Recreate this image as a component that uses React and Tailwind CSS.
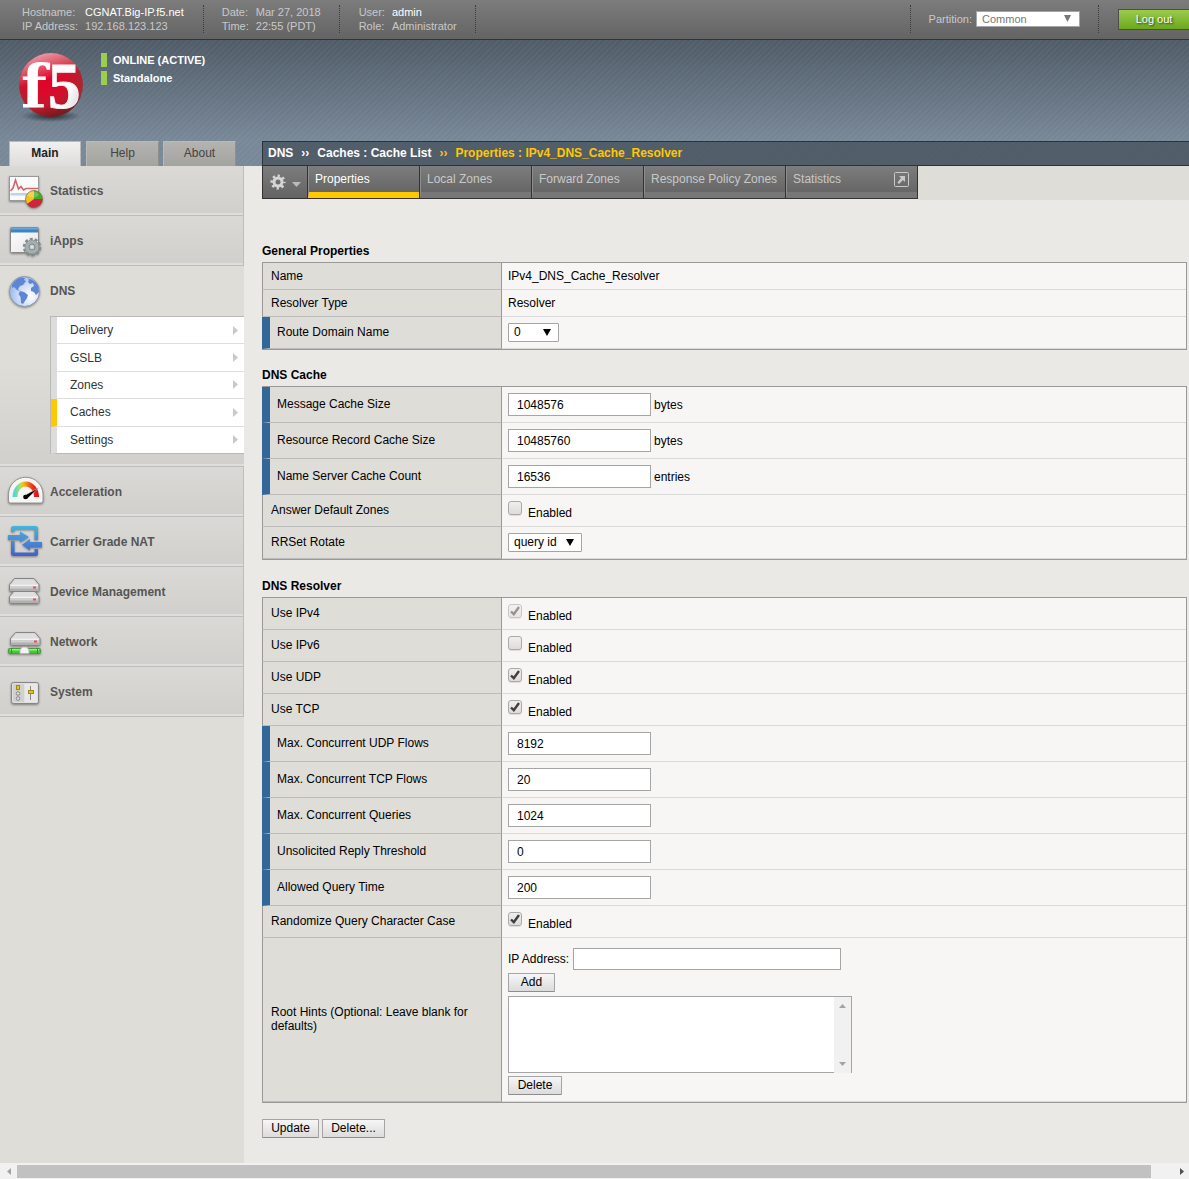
import React from "react";

const stripes =
  "bg-[repeating-linear-gradient(135deg,rgba(255,255,255,0.035)_0px,rgba(255,255,255,0.035)_2px,transparent_2px,transparent_4px)]";

function Logo() {
  return (
    <svg width="72" height="90" viewBox="0 -8 72 90" role="img" aria-label="f5">
      <defs>
        <radialGradient id="ball" cx="0.42" cy="0.38" r="0.65">
          <stop offset="0" stopColor="#e4002b" />
          <stop offset="0.55" stopColor="#d2102a" />
          <stop offset="0.85" stopColor="#b02330" />
          <stop offset="1" stopColor="#8e3a40" />
        </radialGradient>
        <linearGradient id="gloss" x1="0.2" y1="0" x2="0.5" y2="1">
          <stop offset="0" stopColor="#fff" stopOpacity="0.65" />
          <stop offset="0.45" stopColor="#fff" stopOpacity="0" />
          <stop offset="0.8" stopColor="#500" stopOpacity="0" />
          <stop offset="1" stopColor="#400" stopOpacity="0.45" />
        </linearGradient>
        <linearGradient id="letters" x1="0" y1="0" x2="1" y2="1">
          <stop offset="0" stopColor="#fff" />
          <stop offset="0.6" stopColor="#fff" />
          <stop offset="1" stopColor="#c9c4c4" />
        </linearGradient>
        <radialGradient id="ballShadow">
          <stop offset="0" stopColor="#1c232b" stopOpacity="0.9" />
          <stop offset="1" stopColor="#1c232b" stopOpacity="0" />
        </radialGradient>
      </defs>
      <ellipse cx="36" cy="64" rx="30" ry="6" fill="url(#ballShadow)" />
      <circle cx="36" cy="33" r="32" fill="url(#ball)" />
      <circle cx="36" cy="33" r="32" fill="url(#gloss)" />
      <text x="6" y="56" fontFamily="'DejaVu Serif', serif" fontWeight="700" fontSize="60" fill="url(#letters)">
        f
      </text>
      <text
        x="33"
        y="56"
        fontFamily="'Liberation Serif', serif"
        fontWeight="700"
        fontSize="65"
        fill="url(#letters)"
        stroke="#f3f0f0"
        strokeWidth="1"
      >
        5
      </text>
    </svg>
  );
}

const iconShadow = "shrink-0 drop-shadow-[0_1px_1px_rgba(0,0,0,0.4)]";

function StatisticsIcon() {
  return (
    <svg width="38" height="37" viewBox="0 0 38 37" className={iconShadow} aria-hidden="true">
      <rect x="3.5" y="5.5" width="29" height="24" fill="#fafafa" stroke="#999" />
      <rect x="4.5" y="22" width="27" height="2.500" fill="#bcd3ea" />
      <path d="M4.500 20L7 17 9.500 9 12.500 18 15 15.500 17.500 19 20 17.500H32" fill="none" stroke="#d2666b" strokeWidth="1.6" />
      <circle cx="28" cy="28" r="8.5" fill="#f1c21b" />
      <path d="M28 28V19.500A8.500 8.500 0 0 1 36.300 28.500Z" fill="#3fae22" />
      <path d="M28 28L36.400 28A8.500 8.500 0 0 1 21 33Z" fill="#d4213d" />
      <ellipse cx="27" cy="23.500" rx="5.500" ry="3" fill="#fff" opacity="0.25" />
      <circle cx="28" cy="28" r="8.500" fill="none" stroke="#6b5a3a" strokeWidth="0.600" />
    </svg>
  );
}

function IAppsIcon() {
  return (
    <svg width="38" height="37" viewBox="0 0 38 37" className={iconShadow} aria-hidden="true">
      <defs>
        <linearGradient id="win" x1="0" y1="0" x2="1" y2="1">
          <stop offset="0" stopColor="#fff" />
          <stop offset="1" stopColor="#e4e4e8" />
        </linearGradient>
      </defs>
      <rect x="4.500" y="6.500" width="28" height="25" rx="1" fill="url(#win)" stroke="#888" />
      <rect x="5" y="6.500" width="27" height="5" fill="#3f83c7" />
      <rect x="5" y="6.500" width="27" height="2" fill="#68a6de" />
      <circle cx="26" cy="26" r="8" fill="none" stroke="#808a8c" strokeWidth="2.400" strokeDasharray="3 2.026" />
      <circle cx="26" cy="26" r="7" fill="#a5afb0" stroke="#868f91" strokeWidth="0.800" />
      <circle cx="26" cy="26" r="3" fill="#c7cdce" stroke="#7d8688" />
      <circle cx="26" cy="26" r="1" fill="#e4e8e8" />
    </svg>
  );
}

function GlobeIcon() {
  return (
    <svg width="38" height="37" viewBox="0 0 38 37" className={iconShadow} aria-hidden="true">
      <defs>
        <radialGradient id="sea" cx="0.7" cy="0.65" r="0.8">
          <stop offset="0" stopColor="#fff" />
          <stop offset="0.5" stopColor="#cfdcf7" />
          <stop offset="1" stopColor="#8daee8" />
        </radialGradient>
      </defs>
      <circle cx="18.500" cy="19.500" r="15" fill="url(#sea)" stroke="#909aa8" />
      <path
        d="M6 13c2-4 5-6.500 9-7.500l4 .5-1 2 2 1-3 4-3 1-2 3 2 2-3-1-3-3-2 1zM14 19l4 1 4 3-1 3-4 6-2-1-.500-6-2-3zM22 6.500c5 1 9 4 10.500 8.500L33 20l-3 3-2-3-3-1v-3l3-2-1-3-3 1-2-2 1-2z"
        fill="#5f86d3"
      />
    </svg>
  );
}

function GaugeIcon() {
  return (
    <svg width="39" height="37" viewBox="0 0 39 37" className={iconShadow} aria-hidden="true">
      <defs>
        <linearGradient id="speed">
          <stop offset="0" stopColor="#58d6d0" />
          <stop offset="0.25" stopColor="#b8dc5a" />
          <stop offset="0.4" stopColor="#f6b81c" />
          <stop offset="0.7" stopColor="#f0501c" />
          <stop offset="1" stopColor="#e6101c" />
        </linearGradient>
      </defs>
      <path d="M2.500 29V22.500a17 17 0 0 1 34.500 0V29q0 2-2 2H4.500q-2 0-2-2Z" fill="#f5f5f2" stroke="#929292" />
      <path d="M9 25a10.700 13 0 0 1 21.500 0" fill="none" stroke="url(#speed)" strokeWidth="5" />
      <path d="M17.500 24L33 15.500 21 27q-3 0-3.500-3Z" fill="#000" stroke="#f5f5f2" strokeWidth="0.500" />
      <circle cx="19.500" cy="25" r="2.300" fill="#000" />
    </svg>
  );
}

function NatIcon() {
  return (
    <svg width="38" height="37" viewBox="0 0 38 37" className={iconShadow} aria-hidden="true">
      <defs>
        <linearGradient id="nat" x1="0" y1="4" x2="0" y2="34" gradientUnits="userSpaceOnUse">
          <stop offset="0" stopColor="#44b5dc" />
          <stop offset="0.5" stopColor="#4a8ad8" />
          <stop offset="1" stopColor="#4060cc" />
        </linearGradient>
      </defs>
      <g fill="url(#nat)">
        <path d="M5 10V6.500Q5 4 7.500 4H29.500Q32 4 32 6.500V18H28.500V7.500H8.500V10Z" />
        <path d="M32 27V31.500Q32 34 29.500 34H7.500Q5 34 5 31.500V19H8.500V30.500H28.500V27Z" />
        <path d="M2 13H14V9.500L23 15 14 20.500V18H2Z" />
        <path d="M36 20H24V17L16 22.800 24 28.500V25.500H36Z" />
      </g>
    </svg>
  );
}

function Server() {
  return (
    <g>
      <path d="M0.500 6.500L5.500 0.500H25L30 6.500V12Q30 13.500 28.500 13.500H2Q0.500 13.500 0.500 12Z" fill="#cfcfcf" stroke="#858585" />
      <path d="M2 6.500L6 1.500H24.500L28.500 6.500Z" fill="#dedede" />
      <path d="M1.500 6.500H29V8H1.500Z" fill="#f2f2f2" />
      <path d="M1 10.500H29.500V13H1Z" fill="#b0b0b0" />
      <rect x="24" y="8.500" width="3" height="2" fill="#f04a58" />
    </g>
  );
}

function DevicesIcon() {
  return (
    <svg width="38" height="37" viewBox="0 0 38 37" className={iconShadow} aria-hidden="true">
      <g transform="translate(3 18)">
        <Server />
      </g>
      <g transform="translate(3 6)">
        <Server />
      </g>
    </svg>
  );
}

function NetworkIcon() {
  return (
    <svg width="38" height="37" viewBox="0 0 38 37" className={iconShadow} aria-hidden="true">
      <g transform="translate(4 10)">
        <Server />
      </g>
      <rect x="2.500" y="26.500" width="32" height="5" rx="1" fill="#45c832" stroke="#4d9a40" />
      <rect x="4" y="27" width="29" height="1.500" fill="#9bea8b" />
      <rect x="5" y="26" width="1" height="6" fill="#3b8e2e" />
      <rect x="31" y="26" width="1" height="6" fill="#3b8e2e" />
      <path d="M14 31.500V28L16 25H21L23 28V31.500Z" fill="#f4f4f4" stroke="#b4b4b4" />
    </svg>
  );
}

function SystemIcon() {
  return (
    <svg width="38" height="37" viewBox="0 0 38 37" className={iconShadow} aria-hidden="true">
      <rect x="5.500" y="10.500" width="27" height="21" rx="2" fill="#e0e0e0" stroke="#858585" />
      <rect x="7" y="12" width="11" height="18" fill="#d0d0d0" />
      <rect x="19" y="12" width="12" height="18" fill="#e8e8e8" />
      <g stroke="#888" fill="#ddd">
        <rect x="10.500" y="13.500" width="3" height="4" fill="#e4c414" stroke="#9a8a1c" />
        <circle cx="12" cy="21.500" r="1.800" />
        <circle cx="12" cy="26.500" r="1.800" />
      </g>
      <rect x="24" y="14" width="1" height="14" fill="#888" />
      <rect x="22.500" y="18.500" width="5" height="3" fill="#e4c414" stroke="#9a8a1c" />
    </svg>
  );
}

function GearIcon() {
  return (
    <svg width="16" height="16" viewBox="0 0 16 16" aria-hidden="true">
      <circle cx="8" cy="8" r="6.300" fill="none" stroke="#d6d6d6" strokeWidth="2.600" strokeDasharray="2.300 2.648" strokeDashoffset="1.150" />
      <circle cx="8" cy="8" r="4" fill="none" stroke="#d6d6d6" strokeWidth="3" />
    </svg>
  );
}

function PopoutIcon() {
  return (
    <svg width="15" height="15" viewBox="0 0 15 15" aria-hidden="true">
      <rect x="0.500" y="0.500" width="14" height="14" rx="1" fill="none" stroke="#c8c8c8" />
      <path d="M5 4H11V10L9 8 5 12 3.500 10.500 7 6Z" fill="#c8c8c8" />
    </svg>
  );
}

function Separator() {
  return <div className="h-7 border-l border-dotted border-[#3c3c3c]" />;
}

function InfoGroup({ rows, className }) {
  return (
    <dl className={`grid grid-cols-[auto_auto] gap-x-[7px] text-[11px] leading-[14px] text-[#c9c9c9] ${className}`}>
      {rows.map(([label, value, strong]) => (
        <React.Fragment key={label}>
          <dt>{label}</dt>
          <dd className={strong ? "text-white" : ""}>{value}</dd>
        </React.Fragment>
      ))}
    </dl>
  );
}

function TopBar() {
  return (
    <div className="flex h-10 items-start justify-between border-b border-[#333] bg-gradient-to-b from-[#7c7c7c] to-[#646464] pt-[5px]">
      <div className="flex">
        <InfoGroup
          className="pr-[19px] pl-[22px]"
          rows={[
            ["Hostname:", "CGNAT.Big-IP.f5.net", true],
            ["IP Address:", "192.168.123.123"],
          ]}
        />
        <Separator />
        <InfoGroup
          className="px-[18px]"
          rows={[
            ["Date:", "Mar 27, 2018"],
            ["Time:", "22:55 (PDT)"],
          ]}
        />
        <Separator />
        <InfoGroup
          className="pr-[18px] pl-[19px]"
          rows={[
            ["User:", "admin", true],
            ["Role:", "Administrator"],
          ]}
        />
        <Separator />
      </div>
      <div className="flex">
        <Separator />
        <div className="flex items-center gap-1 px-[18px]">
          <label htmlFor="partition" className="text-[11px] text-[#c9c9c9]">
            Partition:
          </label>
          <div className="relative">
            <select
              id="partition"
              className="block h-4 w-[104px] appearance-none border border-[#a5a5a5] bg-white pl-[5px] text-[11px] leading-[14px] text-[#777]"
            >
              <option>Common</option>
            </select>
            <svg className="pointer-events-none absolute top-1 right-[9px]" width="7" height="7" viewBox="0 0 7 7" aria-hidden="true">
              <path d="M0 0H7L3.500 7Z" fill="#777" />
            </svg>
          </div>
        </div>
        <Separator />
        <button
          type="button"
          className="mt-1 ml-[19px] h-[21px] w-[71px] border border-r-0 border-[#4c4c4c] bg-gradient-to-b from-[#9ccb4b] to-[#6ca81a] pb-px text-[11px] leading-[14px] text-white [text-shadow:1px_1px_2px_rgba(0,0,0,0.7)]"
        >
          Log out
        </button>
      </div>
    </div>
  );
}

function SideTab({ children, active }) {
  return (
    <button
      type="button"
      className={
        active
          ? "mr-px h-[25px] w-[72px] border border-b-0 border-[#b9b9b9] bg-gradient-to-b from-[#f0f0ee] to-[#dedddb] pb-[2px] text-xs leading-[14px] font-bold text-[#222]"
          : "h-[25px] w-[73px] border border-b-0 border-[#b9b9b9] border-r-[#8f8f8d] bg-gradient-to-b from-[#b3b3af] to-[#a3a39f] pb-[2px] text-xs leading-[14px] text-[#444]"
      }
    >
      {children}
    </button>
  );
}

function Banner() {
  return (
    <div className="bg-gradient-to-b from-[#4f5b67] to-[#788898] to-80%">
      <div className={stripes}>
        <div className="flex h-[101px] items-start gap-[14px] pt-1 pl-[15px]">
          <Logo />
          <div className="flex flex-col gap-1 pt-[9px] text-[11px] leading-[14px] font-bold text-white">
            <div className="flex gap-[6px]">
              <span className="w-[6px] bg-[#9bcd50]" />
              ONLINE (ACTIVE)
            </div>
            <div className="flex gap-[6px]">
              <span className="w-[6px] bg-[#9bcd50]" />
              Standalone
            </div>
          </div>
        </div>
        <div className="flex">
          <div className="flex w-[262px] shrink-0 gap-1 pl-[9px]">
            <SideTab active>Main</SideTab>
            <SideTab>Help</SideTab>
            <SideTab>About</SideTab>
          </div>
          <nav
            aria-label="Breadcrumb"
            className="flex h-[25px] flex-1 items-center gap-2 border border-r-0 border-[#2c3238] bg-[#48535f]/80 pb-[2px] pl-[5px] text-xs leading-[14px] font-bold text-white"
          >
            <a href="#dns">DNS</a>
            <span>››</span>
            <a href="#caches">Caches : Cache List</a>
            <span className="text-[#ffc800]">››</span>
            <span className="text-[#ffc800]">Properties : IPv4_DNS_Cache_Resolver</span>
          </nav>
        </div>
      </div>
    </div>
  );
}

const itemBg = "bg-gradient-to-b from-[#dad9d5] to-[#d1d0cc]";

function SideItem({ icon, label }) {
  return (
    <li className="border-r border-b border-[#bdbdbd]">
      <a
        href="#section"
        className={`flex h-[49px] items-center border-b-2 border-[#dfdeda] pl-[6px] text-xs leading-[14px] font-bold text-[#555] ${itemBg}`}
      >
        <span className="flex w-11">{icon}</span>
        <span className="pt-[2px]">{label}</span>
      </a>
    </li>
  );
}

function SubMenu() {
  const items = ["Delivery", "GSLB", "Zones", "Caches", "Settings"];
  return (
    <ul className="ml-[50px] grid h-[138px] grid-rows-5 border-t border-l border-[#b9b9b9]">
      {items.map((label) => (
        <li
          key={label}
          className={
            label === "Caches"
              ? "border-b border-l-[6px] border-b-[#dedede] border-l-[#ffc800] bg-white"
              : "border-b border-l-[6px] border-b-[#dedede] border-l-[#dcdcdc] bg-white last:border-b-[#b9b9b9]"
          }
        >
          <a href="#item" className="flex h-full items-center justify-between pr-[6px] pl-[13px] text-xs leading-[14px] text-[#333]">
            {label}
            <svg width="5" height="9" viewBox="0 0 5 9" aria-hidden="true">
              <path d="M0 0L5 4.500 0 9Z" fill="#c9c9c9" />
            </svg>
          </a>
        </li>
      ))}
    </ul>
  );
}

function Sidebar() {
  return (
    <aside className="w-[244px] shrink-0 bg-[#deddd8]">
      <ul>
        <SideItem icon={<StatisticsIcon />} label="Statistics" />
        <SideItem icon={<IAppsIcon />} label="iApps" />
        <li className="border-b border-[#bdbdbd]">
          <div className="border-b-2 border-[#dfdeda] bg-gradient-to-b from-[#deddd8] from-50% to-[#d1d0cc] pb-[10px]">
            <a href="#dns" className="mb-px flex h-[49px] items-center pl-[6px] text-xs leading-[14px] font-bold text-[#555]">
              <span className="flex w-11">
                <GlobeIcon />
              </span>
              DNS
            </a>
            <SubMenu />
          </div>
        </li>
        <SideItem icon={<GaugeIcon />} label="Acceleration" />
        <SideItem icon={<NatIcon />} label="Carrier Grade NAT" />
        <SideItem icon={<DevicesIcon />} label="Device Management" />
        <SideItem icon={<NetworkIcon />} label="Network" />
        <SideItem icon={<SystemIcon />} label="System" />
      </ul>
    </aside>
  );
}

function Tab({ children, active, wide }) {
  return (
    <a
      href="#tab"
      className={`flex h-[33px] justify-between border-r border-b border-[#333] ${wide ? "min-w-[132px]" : "min-w-[112px]"}`}
    >
      <span
        className={`flex flex-1 justify-between border-b-[6px] border-l bg-gradient-to-b from-[#7d7d7d] to-[#666] pt-[6px] pr-2 pl-[6px] ${
          active ? "border-b-[#ffc800] border-l-[#8d8d8d] text-white" : "border-b-[#777] border-l-[#8d8d8d] text-[#c8c8c8]"
        }`}
      >
        {children}
      </span>
    </a>
  );
}

function TabBar() {
  return (
    <nav aria-label="Sections" className="flex h-[34px] bg-[#deddd8] text-xs leading-[14px]">
      <div className="flex bg-[#eae9e5]">
        <button
          type="button"
          aria-label="Settings menu"
          className="flex h-[33px] w-[46px] items-center gap-[6px] border border-t-0 border-[#333] bg-gradient-to-b from-[#7d7d7d] to-[#636363] pl-[7px]"
        >
          <GearIcon />
          <svg width="9" height="5" viewBox="0 0 9 5" className="mt-1" aria-hidden="true">
            <path d="M0 0H9L4.500 5Z" fill="#bbb" />
          </svg>
        </button>
        <Tab active>Properties</Tab>
        <Tab>Local Zones</Tab>
        <Tab>Forward Zones</Tab>
        <Tab>Response Policy Zones</Tab>
        <Tab wide>
          Statistics
          <PopoutIcon />
        </Tab>
      </div>
    </nav>
  );
}

function Section({ title, children, className }) {
  return (
    <section className={className}>
      <h2 className="h-5 text-xs leading-[18px] font-bold">{title}</h2>
      <table className="w-full table-fixed border-separate border-spacing-0 border-y border-r border-[#999] bg-[#f7f6f4]">
        <colgroup>
          <col className="w-[240px]" />
          <col />
        </colgroup>
        <tbody>{children}</tbody>
      </table>
    </section>
  );
}

function Row({ label, htmlFor, marked, children, height = "h-8", plain, top }) {
  return (
    <tr className={height}>
      <th
        scope="row"
        className={`border-r border-b border-r-[#999] border-b-[#bbb] bg-[#deddd8] pr-5 text-left font-normal ${
          marked ? "border-l-8 border-l-[#336699] pl-[7px]" : "border-l border-l-[#999] pl-2"
        } ${plain ? "" : "pb-[2px]"}`}
      >
        {htmlFor ? <label htmlFor={htmlFor}>{label}</label> : label}
      </th>
      <td className={`border-b border-[#dadada] px-[6px] ${top ? "pt-[6px] align-top" : "align-middle"}`}>{children}</td>
    </tr>
  );
}

function FieldRow({ id, label, value, unit }) {
  return (
    <Row label={label} htmlFor={id} marked height="h-9">
      <div className="flex items-center gap-[3px]">
        <input
          id={id}
          type="text"
          defaultValue={value}
          className="h-[23px] w-[143px] border border-[#a5a5a5] bg-white pt-px pl-2"
        />
        {unit && <span className="pt-px">{unit}</span>}
      </div>
    </Row>
  );
}

function CheckRow({ label, checked, disabled }) {
  return (
    <Row label={label} top>
      <label className="relative flex items-start gap-[6px]">
        <input
          type="checkbox"
          aria-label={label}
          defaultChecked={checked}
          disabled={disabled}
          className="peer h-[14px] w-[14px] appearance-none rounded-[3px] border border-[#a9a9a9] bg-gradient-to-b from-[#efefef] to-[#dcdcdc] shadow-[0_1px_0_#ddd] disabled:opacity-60"
        />
        <svg
          className="pointer-events-none absolute top-[2px] left-[2px] hidden peer-checked:block peer-disabled:opacity-50"
          width="10"
          height="10"
          viewBox="0 0 10 10"
          aria-hidden="true"
        >
          <path d="M1 5.500L3.800 8.200 9 1" fill="none" stroke="#3f3f3f" strokeWidth="2.400" />
        </svg>
        <span className="pt-[5px]">Enabled</span>
      </label>
    </Row>
  );
}

function SmallSelect({ id, value, className }) {
  return (
    <div className="relative w-fit">
      <select
        id={id}
        className={`block h-[19px] appearance-none rounded-[1px] border border-[#a5a5a5] bg-white pb-[2px] pl-[5px] leading-[14px] ${className}`}
      >
        <option>{value}</option>
      </select>
      <svg className="pointer-events-none absolute top-[6px] right-[8px]" width="8" height="7" viewBox="0 0 8 7" aria-hidden="true">
        <path d="M0 0H8L4 7Z" fill="#000" />
      </svg>
    </div>
  );
}

function PushButton({ children, className }) {
  return (
    <button
      type="button"
      className={`block h-[19px] rounded-[1px] border border-[#a5a5a5] border-b-[#8d8d8d] bg-gradient-to-b from-[#f6f6f6] to-[#dcdcdc] pb-[2px] text-xs leading-[14px] ${className}`}
    >
      {children}
    </button>
  );
}

function RootHints() {
  return (
    <div>
      <div className="flex items-center gap-1">
        <label htmlFor="hint-ip">IP Address:</label>
        <input id="hint-ip" type="text" className="h-[22px] w-[268px] border border-[#a5a5a5] bg-white pl-2" />
      </div>
      <PushButton className="mt-[3px] w-[47px]">Add</PushButton>
      <div className="relative mt-1 w-[344px]">
        <select
          multiple
          aria-label="Root hints"
          className="block h-[77px] w-full appearance-none overflow-hidden border border-[#a5a5a5] bg-white"
        />
        <div className="absolute top-px right-px bottom-0 flex w-[17px] flex-col items-center justify-between bg-[#f1f1f1] pt-[7px] pb-[7px]">
          <svg width="7" height="4" viewBox="0 0 7 4" aria-hidden="true">
            <path d="M0 4H7L3.500 0Z" fill="#a3a3a3" />
          </svg>
          <svg width="7" height="4" viewBox="0 0 7 4" aria-hidden="true">
            <path d="M0 0H7L3.500 4Z" fill="#a3a3a3" />
          </svg>
        </div>
      </div>
      <PushButton className="mt-[3px] w-[54px]">Delete</PushButton>
    </div>
  );
}

function HorizontalScroll() {
  return (
    <div className="flex h-4 items-center bg-[#f1f1f1]">
      <div className="flex w-[17px] justify-center">
        <svg width="4" height="7" viewBox="0 0 4 7" aria-hidden="true">
          <path d="M4 0V7L0 3.500Z" fill="#a3a3a3" />
        </svg>
      </div>
      <div className="h-[13px] flex-1 bg-[#c1c1c1]" />
      <div className="flex w-[38px] justify-end pr-[5px]">
        <svg width="4" height="7" viewBox="0 0 4 7" aria-hidden="true">
          <path d="M0 0V7L4 3.500Z" fill="#505050" />
        </svg>
      </div>
    </div>
  );
}

export default function App() {
  return (
    <div className="flex min-h-screen flex-col bg-[#eae9e5] font-['Liberation_Sans',Arial,sans-serif] text-xs leading-[14px] text-black">
      <header>
        <TopBar />
        <Banner />
      </header>
      <div className="flex flex-1">
        <Sidebar />
        <main className="min-w-0 flex-1 pl-[18px]">
          <TabBar />
          <form className="pt-[42px] pr-[2px] pb-6" onSubmit={(e) => e.preventDefault()}>
            <Section title="General Properties">
              <Row label="Name" height="h-[27px]" plain>
                IPv4_DNS_Cache_Resolver
              </Row>
              <Row label="Resolver Type" height="h-[27px]" plain>
                Resolver
              </Row>
              <Row label="Route Domain Name" htmlFor="route-domain" marked>
                <SmallSelect id="route-domain" value="0" className="w-[51px]" />
              </Row>
            </Section>
            <Section title="DNS Cache" className="mt-4">
              <FieldRow id="msg-cache" label="Message Cache Size" value="1048576" unit="bytes" />
              <FieldRow id="rr-cache" label="Resource Record Cache Size" value="10485760" unit="bytes" />
              <FieldRow id="ns-cache" label="Name Server Cache Count" value="16536" unit="entries" />
              <CheckRow label="Answer Default Zones" />
              <Row label="RRSet Rotate" htmlFor="rrset">
                <SmallSelect id="rrset" value="query id" className="w-[74px]" />
              </Row>
            </Section>
            <Section title="DNS Resolver" className="mt-[17px]">
              <CheckRow label="Use IPv4" checked disabled />
              <CheckRow label="Use IPv6" />
              <CheckRow label="Use UDP" checked />
              <CheckRow label="Use TCP" checked />
              <FieldRow id="udp-flows" label="Max. Concurrent UDP Flows" value="8192" />
              <FieldRow id="tcp-flows" label="Max. Concurrent TCP Flows" value="20" />
              <FieldRow id="queries" label="Max. Concurrent Queries" value="1024" />
              <FieldRow id="unsolicited" label="Unsolicited Reply Threshold" value="0" />
              <FieldRow id="query-time" label="Allowed Query Time" value="200" />
              <CheckRow label="Randomize Query Character Case" checked />
              <Row label="Root Hints (Optional: Leave blank for defaults)" height="h-[164px]">
                <div className="pt-1">
                  <RootHints />
                </div>
              </Row>
            </Section>
            <div className="flex gap-[3px] pt-4">
              <PushButton className="w-[57px]">Update</PushButton>
              <PushButton className="w-[63px]">Delete...</PushButton>
            </div>
          </form>
        </main>
      </div>
      <HorizontalScroll />
    </div>
  );
}
